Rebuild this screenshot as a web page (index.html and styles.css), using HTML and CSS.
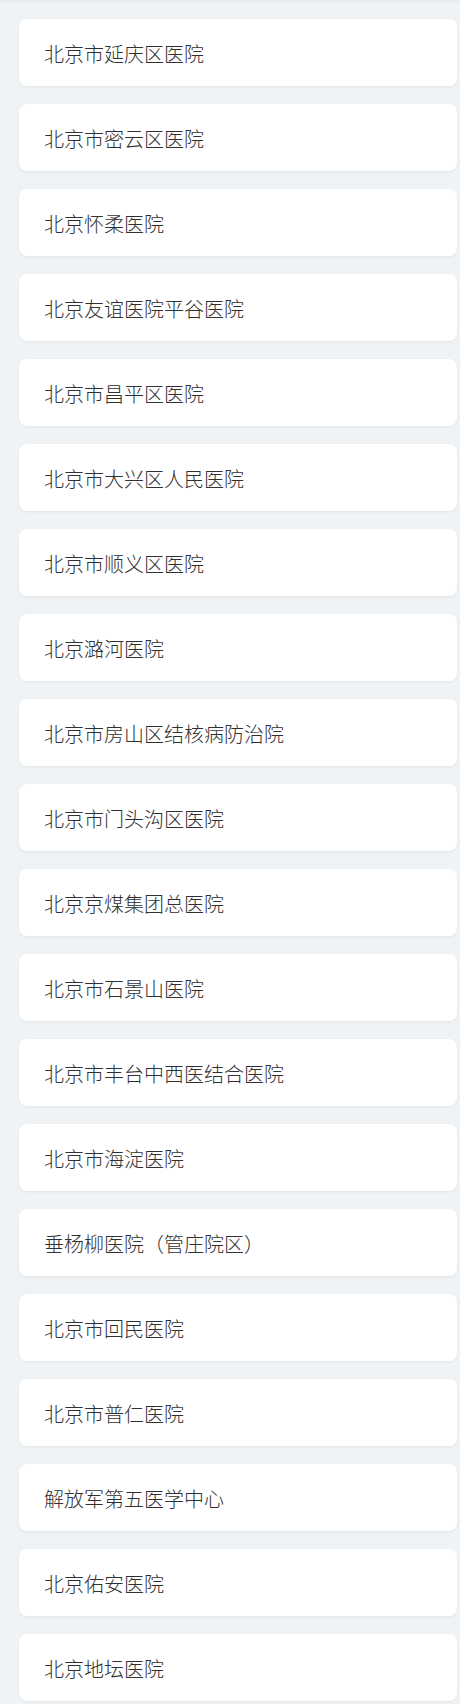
FILE: index.html
```html
<!DOCTYPE html>
<html lang="zh-CN">
<head>
<meta charset="utf-8">
<link rel="stylesheet" href="styles.css">
</head>
<body>
<div class="topbar"></div>
<div class="list">
  <div class="card">北京市延庆区医院</div>
  <div class="card">北京市密云区医院</div>
  <div class="card">北京怀柔医院</div>
  <div class="card">北京友谊医院平谷医院</div>
  <div class="card">北京市昌平区医院</div>
  <div class="card">北京市大兴区人民医院</div>
  <div class="card">北京市顺义区医院</div>
  <div class="card">北京潞河医院</div>
  <div class="card">北京市房山区结核病防治院</div>
  <div class="card">北京市门头沟区医院</div>
  <div class="card">北京京煤集团总医院</div>
  <div class="card">北京市石景山医院</div>
  <div class="card">北京市丰台中西医结合医院</div>
  <div class="card">北京市海淀医院</div>
  <div class="card">垂杨柳医院（管庄院区）</div>
  <div class="card">北京市回民医院</div>
  <div class="card">北京市普仁医院</div>
  <div class="card">解放军第五医学中心</div>
  <div class="card">北京佑安医院</div>
  <div class="card">北京地坛医院</div>
</div>
</body>
</html>
```
FILE: styles.css
```css
html, body {
  margin: 0;
  padding: 0;
  background: #f0f3f6;
}
body {
  font-family: "Noto Sans CJK SC", "Noto Sans", sans-serif;
  color: #303030;
}
.topbar {
  height: 3px;
  background: #e8ecf0;
}
.list {
  display: flex;
  flex-direction: column;
  gap: 18px;
  padding: 16px 3px 3px 19px;
}
.card {
  height: 67px;
  box-sizing: border-box;
  background: #ffffff;
  border-radius: 8px;
  box-shadow: 0 1px 3px rgba(0, 0, 0, 0.06);
  padding-left: 25px;
  display: flex;
  align-items: center;
  font-size: 20px;
  font-weight: 300;
  line-height: 1;
  padding-top: 3px;
}
```
